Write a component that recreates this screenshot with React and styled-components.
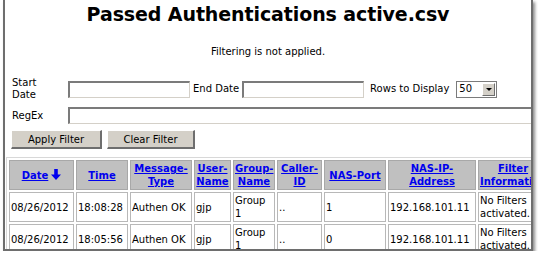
import React from 'react'
import styled, { createGlobalStyle } from 'styled-components'

const Global = createGlobalStyle`
  html, body {
    margin: 0;
    padding: 0;
    background: #ffffff;
  }
  body {
    font-family: "DejaVu Sans", Verdana, sans-serif;
    font-size: 10px;
    color: #000;
  }
`;

const Window = styled.div`
  box-sizing: border-box;
  width: 530px;
  height: 251px;
  margin-left: 3px;
  background: #fff;
  border-left: 2px solid #6e6e6e;
  border-right: 2px solid #6e6e6e;
  border-bottom: 2px solid #6e6e6e;
  box-shadow: 2px 2px 3px rgba(0, 0, 0, 0.45);
  overflow: hidden;
`;

const Title = styled.h1`
  margin: 0;
  padding-top: 3px;
  font-size: 19px;
  line-height: 23px;
  font-weight: bold;
  text-align: center;
  letter-spacing: -0.1px;
`;

const Status = styled.p`
  margin: 20px 0 0;
  line-height: 12px;
  text-align: center;
`;

const Form = styled.div`
  padding: 19px 0 0 7px;
  display: flex;
  flex-direction: column;
  gap: 6px;
`;

const Row = styled.div`
  display: flex;
  align-items: center;
  white-space: nowrap;
`;

const Label = styled.span`
  box-sizing: border-box;
  width: ${(p) => (p.$w ? `${p.$w}px` : 'auto')};
  flex: none;
  line-height: 12px;
  white-space: ${(p) => (p.$wrap ? 'normal' : 'nowrap')};
  padding: 0 ${(p) => p.$pad || 0}px;
  padding-right: ${(p) => (p.$w ? '12px' : `${p.$pad || 0}px`)};
`;

const Input = styled.div`
  box-sizing: border-box;
  flex: none;
  width: ${(p) => p.$w}px;
  height: 17px;
  background: #fff;
  border-top: 2px solid #7b7b7b;
  border-left: 2px solid #7b7b7b;
  border-bottom: 1px solid #d4d0c8;
  border-right: 1px solid #d4d0c8;
`;

const Select = styled.div`
  box-sizing: border-box;
  flex: none;
  width: 41px;
  height: 17px;
  margin-left: 1px;
  border: 1px solid #7b7b7b;
  display: flex;
  align-items: center;
  justify-content: space-between;
  padding: 0 1px 0 2px;
  line-height: 12px;
`;

const DropButton = styled.span`
  box-sizing: border-box;
  width: 13px;
  height: 13px;
  background: #d4d0c8;
  border-top: 1px solid #ffffff;
  border-left: 1px solid #ffffff;
  border-bottom: 1px solid #6e6e6e;
  border-right: 1px solid #6e6e6e;
  display: flex;
  align-items: center;
  justify-content: center;

  &::after {
    content: '';
    border-left: 3px solid transparent;
    border-right: 3px solid transparent;
    border-top: 3px solid #000;
  }
`;

const Buttons = styled.div`
  display: flex;
  gap: 5px;
  margin-left: -1px;
`;

const Button = styled.button`
  box-sizing: border-box;
  width: ${(p) => p.$w}px;
  height: 19px;
  padding: 0;
  font-family: "DejaVu Sans", Verdana, sans-serif;
  font-size: 10px;
  color: #000;
  background: #d4d0c8;
  border-top: 1px solid #ffffff;
  border-left: 1px solid #ffffff;
  border-bottom: 2px solid #6e6e6e;
  border-right: 2px solid #6e6e6e;
`;

const Table = styled.table`
  margin: 8px 0 0 1px;
  border-collapse: separate;
  border-spacing: 2px;
  table-layout: fixed;
  width: ${(p) => p.$w}px;
  border-top: 1px solid #d8d8d8;
  border-left: 1px solid #d8d8d8;
  border-bottom: 1px solid #808080;
  border-right: 1px solid #808080;
`;

const Th = styled.th`
  box-sizing: border-box;
  width: ${(p) => p.$w}px;
  height: 29px;
  padding: 1px;
  background: #c0c0c0;
  border: 1px solid #a8a8a8;
  font-weight: bold;
  line-height: 13px;
  text-align: center;
  vertical-align: middle;
  white-space: ${(p) => (p.$nowrap ? 'nowrap' : 'normal')};
`;

const HeadLink = styled.a`
  color: #0000ee;
  text-decoration: underline;
`;

const Td = styled.td`
  box-sizing: border-box;
  height: 30px;
  padding: 1px;
  border: 1px solid #b8b8b8;
  line-height: 13px;
  vertical-align: middle;
  white-space: ${(p) => (p.$wrap ? 'normal' : 'nowrap')};
  overflow: hidden;
`;

const Arrow = () => (
  <svg width="10" height="11" viewBox="0 0 10 11" style={{ marginLeft: 3, verticalAlign: '-1px' }}>
    <path d="M3.2 0h3.6v5.5H10L5 11 0 5.5h3.2z" fill="#0000ee" />
  </svg>
);

const columns = [
  { key: 'date', label: 'Date', w: 65, arrow: true },
  { key: 'time', label: 'Time', w: 52 },
  { key: 'msg', label: 'Message-Type', w: 62 },
  { key: 'user', label: 'User-Name', w: 37 },
  { key: 'group', label: 'Group-Name', w: 42 },
  { key: 'caller', label: 'Caller-ID', w: 45 },
  { key: 'port', label: 'NAS-Port', w: 62 },
  { key: 'ip', label: 'NAS-IP-Address', w: 88 },
  { key: 'filter', label: ['Filter', 'Information'], w: 70, nowrap: true },
];

const tableWidth = columns.reduce((s, c) => s + c.w, 0) + 2 * (columns.length + 1) + 2;

const rows = [
  { date: '08/26/2012', time: '18:08:28', msg: 'Authen OK', user: 'gjp', group: 'Group 1', caller: '..', port: '1', ip: '192.168.101.11', filter: 'No Filters activated.' },
  { date: '08/26/2012', time: '18:05:56', msg: 'Authen OK', user: 'gjp', group: 'Group 1', caller: '..', port: '0', ip: '192.168.101.11', filter: 'No Filters activated.' },
];

const App = () => (
  <Window>
    <Global />
    <Title>Passed Authentications active.csv</Title>
    <Status>Filtering is not applied.</Status>
    <Form>
      <Row>
        <Label $w={56} $wrap>Start Date</Label>
        <Input $w={122} />
        <Label $pad={3}>End Date</Label>
        <Input $w={122} />
        <Label $pad={6}>Rows to Display</Label>
        <Select>
          50
          <DropButton />
        </Select>
      </Row>
      <Row>
        <Label $w={56}>RegEx</Label>
        <Input $w={520} />
      </Row>
      <Buttons>
        <Button $w={91}>Apply Filter</Button>
        <Button $w={88}>Clear Filter</Button>
      </Buttons>
    </Form>
    <Table $w={tableWidth}>
      <thead>
        <tr>
          {columns.map((c) => (
            <Th key={c.key} $w={c.w} $nowrap={c.nowrap}>
              {Array.isArray(c.label) ? (
                <>
                  <HeadLink href="#">{c.label[0]}</HeadLink>
                  <br />
                  <HeadLink href="#">{c.label[1]}</HeadLink>
                </>
              ) : (
                <HeadLink href="#">{c.label}</HeadLink>
              )}
              {c.arrow && <Arrow />}
            </Th>
          ))}
        </tr>
      </thead>
      <tbody>
        {rows.map((r, i) => (
          <tr key={i}>
            {columns.map((c) => (
              <Td key={c.key} $wrap={c.key === 'group' || c.key === 'filter'}>
                {r[c.key]}
              </Td>
            ))}
          </tr>
        ))}
      </tbody>
    </Table>
  </Window>
);

export default App
